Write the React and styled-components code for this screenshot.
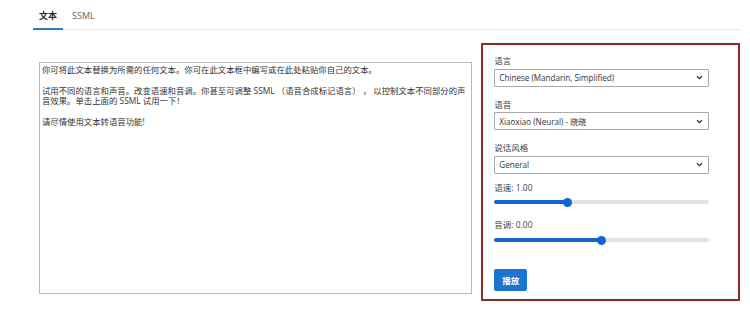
import React from "react";
import styled, { createGlobalStyle } from "styled-components";

const GlobalStyle = createGlobalStyle`
  html, body {
    margin: 0;
    padding: 0;
    background: #fff;
  }
  body {
    width: 750px;
    height: 310px;
    overflow: hidden;
    font-family: "Open Sans", "Noto Sans", "Noto Sans CJK SC", sans-serif;
    color: #333;
  }
`;

const Page = styled.div`
  padding: 5px 10px 0 33px;
`;

const TabBar = styled.div`
  display: flex;
  border-bottom: 1px solid #e8e8e8;
`;

const Tab = styled.div`
  font-size: 9px;
  line-height: 12px;
  padding: 5px 6px 6px;
  color: ${(p) => (p.active ? "#222" : "#666")};
  border-bottom: 2px solid ${(p) => (p.active ? "#2b7bc0" : "transparent")};
  margin-bottom: -1px;
  margin-right: 3px;
  font-weight: ${(p) => (p.active ? 600 : 400)};
`;

const Main = styled.div`
  display: flex;
  align-items: flex-start;
  gap: 9px;
  padding-left: 6px;
  margin-top: 13px;
`;

const TextBox = styled.div`
  margin-top: 19px;
  width: 434px;
  height: 232px;
  border: 1px solid #b9b9b9;
  padding: 2px 2px;
  box-sizing: border-box;
  font-size: 8.4px;
  line-height: 10.5px;
  color: #333;
`;

const Para = styled.p`
  margin: 0 0 10px;
`;

const Panel = styled.div`
  width: 259px;
  height: 258px;
  box-sizing: border-box;
  border: 2px solid #8e2a24;
  padding: 10px 29px 0 11px;
  display: flex;
  flex-direction: column;
`;

const Label = styled.div`
  font-size: 8.5px;
  line-height: 11px;
  color: #444;
  margin-bottom: 2.5px;
`;

const Field = styled.div`
  margin-bottom: ${(p) => p.gap}px;
`;

const Select = styled.div`
  height: 18px;
  box-sizing: border-box;
  border: 1px solid #a9a9a9;
  border-radius: 1px;
  display: flex;
  align-items: center;
  justify-content: space-between;
  padding: 0 5px 0 4px;
  font-size: 8.1px;
  color: #333;
`;

const Track = styled.div`
  position: relative;
  height: 4px;
  border-radius: 2px;
  background: #e4e4e4;
  margin-top: ${(p) => p.offset}px;
`;

const Fill = styled.div`
  height: 100%;
  border-radius: 2px;
  background: #1266d4;
`;

const Thumb = styled.div`
  position: absolute;
  top: -2.5px;
  width: 9px;
  height: 9px;
  margin-left: -4.5px;
  border-radius: 50%;
  background: #1266d4;
`;

const Button = styled.button`
  align-self: flex-start;
  margin-top: 27px;
  width: 33px;
  height: 22px;
  border: none;
  border-radius: 2px;
  background: #1b74cf;
  color: #fff;
  font-family: inherit;
  font-size: 8.5px;
  font-weight: 700;
  padding: 0;
`;

function Chevron() {
  return (
    <svg width="7" height="5" viewBox="0 0 7 5">
      <path d="M1 1.2 L3.5 3.6 L6 1.2" fill="none" stroke="#333" strokeWidth="1.3" />
    </svg>
  );
}

function Slider({ label, value, offset, gap }) {
  return (
    <Field gap={gap}>
      <Label>{label}</Label>
      <Track offset={offset}>
        <Fill style={{ width: `${value}%` }} />
        <Thumb style={{ left: `${value}%` }} />
      </Track>
    </Field>
  );
}

export default function App() {
  return (
    <>
      <GlobalStyle />
      <Page>
        <TabBar>
          <Tab active>文本</Tab>
          <Tab>SSML</Tab>
        </TabBar>
        <Main>
          <TextBox>
            <Para>你可将此文本替换为所需的任何文本。你可在此文本框中编写或在此处粘贴你自己的文本。</Para>
            <Para>
              试用不同的语言和声音。改变语速和音调。你甚至可调整 SSML （语音合成标记语言） ， 以控制文本不同部分的声音效果。单击上面的 SSML 试用一下！
            </Para>
            <Para>请尽情使用文本转语音功能!</Para>
          </TextBox>
          <Panel>
            <Field gap={12}>
              <Label>语言</Label>
              <Select>
                Chinese (Mandarin, Simplified)
                <Chevron />
              </Select>
            </Field>
            <Field gap={12}>
              <Label>语音</Label>
              <Select>
                Xiaoxiao (Neural) - 晓晓
                <Chevron />
              </Select>
            </Field>
            <Field gap={8}>
              <Label>说话风格</Label>
              <Select>
                General
                <Chevron />
              </Select>
            </Field>
            <Slider label="语速: 1.00" value={34} offset={7.5} gap={15} />
            <Slider label="音调: 0.00" value={50} offset={8} gap={0} />
            <Button>播放</Button>
          </Panel>
        </Main>
      </Page>
    </>
  );
}
